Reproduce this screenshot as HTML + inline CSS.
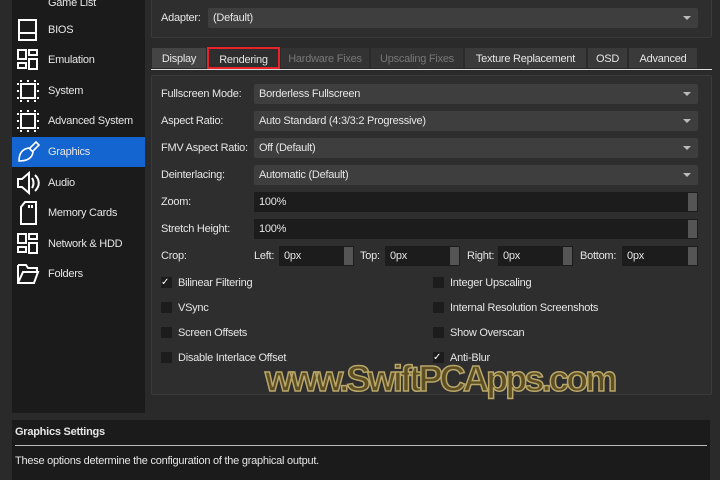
<!DOCTYPE html><html><head><style>
*{box-sizing:border-box;margin:0;padding:0}
body{width:720px;height:480px;background:#2a2a2a;font-family:"Liberation Sans",sans-serif;font-size:11px;letter-spacing:-0.25px;color:#e6e6e6;position:relative;overflow:hidden}
.a{position:absolute;white-space:nowrap}
.side{left:12px;top:0;width:133px;height:413px;background:#1b1b1b}
.it{position:absolute;left:0;width:133px;height:30px;line-height:30px;padding-left:36px;font-size:11px}
.it svg{position:absolute;left:4px;top:3px}
.sel{background:#1565d0}
.box{border:1px solid #3a3a3a;border-radius:2px;background:#2e2e2e}
.cb{height:20px;background:#3e3e3e;border-radius:2px;padding-left:5px;line-height:20px}
.cb:after{content:"";position:absolute;right:7px;top:8px;border:4px solid transparent;border-top:4px solid #bbb}
.sp{height:20px;background:#1c1c1c;padding-left:5px;line-height:20px}
.sp:after{content:"";position:absolute;right:1px;top:1px;width:9px;height:18px;background:#555}
.tab{position:absolute;top:47px;height:22px;line-height:22px;text-align:center;background:#3a3a3a;border:1px solid #2a2a2a}
.dis{color:#777;background:#333}
.ck{position:absolute;width:11px;height:11px;background:#1c1c1c}
</style></head><body>
<div class="a side">
<div class="it" style="top:-12px">Game List</div>
<div class="it" style="top:15px"><svg width="24" height="24"><rect x="3" y="2" width="17" height="20" fill="none" stroke="#fff" stroke-width="2"/><line x1="3" y1="15" x2="20" y2="15" stroke="#fff" stroke-width="2"/></svg>BIOS</div>
<div class="it" style="top:45px"><svg width="24" height="24" fill="none" stroke="#fff" stroke-width="2"><rect x="2" y="2" width="8" height="9"/><rect x="13" y="2" width="8" height="5"/><rect x="2" y="15" width="8" height="5"/><rect x="13" y="11" width="8" height="10"/></svg>Emulation</div>
<div class="it" style="top:76px"><svg width="24" height="24" fill="none" stroke="#fff" stroke-width="2"><rect x="5" y="5" width="14" height="14"/><path d="M1 5h2M1 12h2M1 19h2M21 5h2M21 12h2M21 19h2M5 1v2M12 1v2M19 1v2M5 21v2M12 21v2M19 21v2"/></svg>System</div>
<div class="it" style="top:106px"><svg width="24" height="24" fill="none" stroke="#fff" stroke-width="2"><rect x="5" y="5" width="14" height="14"/><path d="M1 5h2M1 12h2M1 19h2M21 5h2M21 12h2M21 19h2M5 1v2M12 1v2M19 1v2M5 21v2M12 21v2M19 21v2"/></svg>Advanced System</div>
<div class="it sel" style="top:137px"><svg width="26" height="24" fill="none" stroke="#fff" stroke-width="1.6"><path d="M3 21c0-7 3-12 10-13l4 4c-1 7-7 9-14 9z M14 8l6-6 3 3-6 6"/></svg>Graphics</div>
<div class="it" style="top:168px"><svg width="28" height="24" fill="none" stroke="#fff" stroke-width="2"><path d="M2 8h4l7-6v20l-7-6H2z M16 7c2 3 2 7 0 10 M19 4c5 5 5 11 0 16"/></svg>Audio</div>
<div class="it" style="top:198px"><svg width="24" height="24" fill="none" stroke="#fff" stroke-width="2"><path d="M9 1h11v22H5V6z M13 4v3M16 4v3"/></svg>Memory Cards</div>
<div class="it" style="top:229px"><svg width="24" height="24" fill="none" stroke="#fff" stroke-width="2"><rect x="2" y="2" width="8" height="9"/><rect x="13" y="2" width="8" height="5"/><rect x="2" y="15" width="8" height="5"/><rect x="13" y="11" width="8" height="10"/></svg>Network &amp; HDD</div>
<div class="it" style="top:259px"><svg width="24" height="24" fill="none" stroke="#fff" stroke-width="2"><path d="M2 3h8l2 3h9v4 M2 3v18h16l4-11H7L2 21"/></svg>Folders</div>
</div>
<div class="a box" style="left:151px;top:-4px;width:561px;height:42px"></div>
<div class="a" style="left:161px;top:12px">Adapter:</div>
<div class="a cb" style="left:208px;top:8px;width:490px">(Default)</div>
<div class="a" style="left:151px;top:69px;width:561px;height:1px;background:#ddd"></div>
<div class="tab" style="left:151px;width:56px;background:#444">Display</div>
<div class="tab" style="left:207px;width:73px;background:#2e2e2e;border:2px solid #e8242a">Rendering</div>
<div class="tab dis" style="left:280px;width:90px">Hardware Fixes</div>
<div class="tab dis" style="left:370px;width:94px">Upscaling Fixes</div>
<div class="tab" style="left:464px;width:123px">Texture Replacement</div>
<div class="tab" style="left:587px;width:41px">OSD</div>
<div class="tab" style="left:628px;width:70px">Advanced</div>
<div class="a box" style="left:151px;top:75px;width:561px;height:320px"></div>
<div class="a" style="left:161px;top:88px">Fullscreen Mode:</div><div class="a cb" style="left:254px;top:84px;width:444px">Borderless Fullscreen</div>
<div class="a" style="left:161px;top:115px">Aspect Ratio:</div><div class="a cb" style="left:254px;top:111px;width:444px">Auto Standard (4:3/3:2 Progressive)</div>
<div class="a" style="left:161px;top:142px">FMV Aspect Ratio:</div><div class="a cb" style="left:254px;top:138px;width:444px">Off (Default)</div>
<div class="a" style="left:161px;top:169px">Deinterlacing:</div><div class="a cb" style="left:254px;top:165px;width:444px">Automatic (Default)</div>
<div class="a" style="left:161px;top:196px">Zoom:</div><div class="a sp" style="left:254px;top:192px;width:444px">100%</div>
<div class="a" style="left:161px;top:223px">Stretch Height:</div><div class="a sp" style="left:254px;top:219px;width:444px">100%</div>
<div class="a" style="left:161px;top:250px">Crop:</div>
<div class="a" style="left:254px;top:250px">Left:</div><div class="a sp" style="left:279px;top:246px;width:75px">0px</div>
<div class="a" style="left:360px;top:250px">Top:</div><div class="a sp" style="left:385px;top:246px;width:75px">0px</div>
<div class="a" style="left:467px;top:250px">Right:</div><div class="a sp" style="left:498px;top:246px;width:75px">0px</div>
<div class="a" style="left:580px;top:250px">Bottom:</div><div class="a sp" style="left:622px;top:246px;width:76px">0px</div>
<div class="ck" style="left:161px;top:277px;color:#fff;font-size:10px;line-height:11px">✓</div><div class="a" style="left:178px;top:277px">Bilinear Filtering</div>
<div class="ck" style="left:161px;top:302px"></div><div class="a" style="left:178px;top:302px">VSync</div>
<div class="ck" style="left:161px;top:327px"></div><div class="a" style="left:178px;top:327px">Screen Offsets</div>
<div class="ck" style="left:161px;top:352px"></div><div class="a" style="left:178px;top:352px">Disable Interlace Offset</div>
<div class="ck" style="left:433px;top:277px"></div><div class="a" style="left:450px;top:277px">Integer Upscaling</div>
<div class="ck" style="left:433px;top:302px"></div><div class="a" style="left:450px;top:302px">Internal Resolution Screenshots</div>
<div class="ck" style="left:433px;top:327px"></div><div class="a" style="left:450px;top:327px">Show Overscan</div>
<div class="ck" style="left:433px;top:352px;color:#fff;font-size:10px;line-height:11px">✓</div><div class="a" style="left:450px;top:352px">Anti-Blur</div>
<div class="a" style="left:265px;top:358px;font-size:36px;font-weight:bold;color:#5e4f22;-webkit-text-stroke:1.5px #b8a66a;letter-spacing:-2.8px">www.SwiftPCApps.com</div>
<div class="a" style="left:12px;top:420px;width:698px;height:60px;background:#1b1b1b"></div>
<div class="a" style="left:15px;top:426px;font-weight:bold">Graphics Settings</div>
<div class="a" style="left:15px;top:445px;width:692px;height:1px;background:#bbb"></div>
<div class="a" style="left:15px;top:455px">These options determine the configuration of the graphical output.</div>
</body></html>
